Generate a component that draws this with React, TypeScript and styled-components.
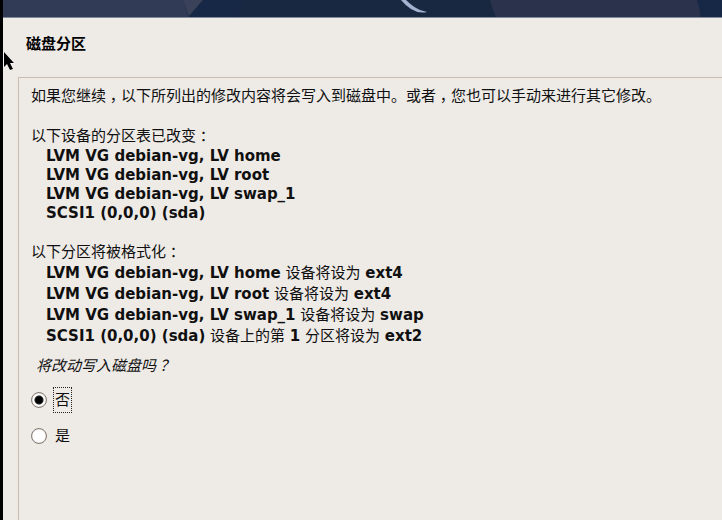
import React, { useState } from "react";
import styled, { createGlobalStyle } from "styled-components";

const GlobalStyle = createGlobalStyle`
  *, *::before, *::after { box-sizing: border-box; }
  body {
    margin: 0;
    background: #eeebe7;
    color: #101010;
    font-family: "DejaVu Sans", "Noto Sans CJK SC", sans-serif;
    font-size: 15px;
    overflow: hidden;
  }
`;

const Screen = styled.div`
  display: flex;
  flex-direction: column;
  min-height: 100vh;
  border-left: 3px solid #000;
`;

const Banner = styled.header`
  height: 18px;
  background: #192841;
  border-bottom: 1px solid #818b9c;
  overflow: hidden;
`;

const BannerArt = styled.svg`
  display: block;
`;

const Title = styled.h1`
  margin: 0;
  padding: 13px 23px 0;
  height: 59px;
  font-family: "Noto Sans CJK SC", sans-serif;
  font-size: 15px;
  line-height: 24px;
  font-weight: 700;
  color: #000;
`;

const Panel = styled.main`
  flex: 1;
  margin-left: 15px;
  padding: 7px 12px;
  border-top: 1px solid #c8bcae;
  border-left: 1px solid #c8bcae;
`;

const Paragraph = styled.p`
  margin: 0;
  font-family: "Noto Sans CJK SC", sans-serif;
  line-height: 20px;
  white-space: nowrap;
`;

const Section = styled.section`
  margin-top: 20px;

  & + & {
    margin-top: 18px;
  }
`;

const Mark = styled.span`
  display: inline-block;
  width: 15px;
  text-align: center;
  font-feature-settings: "halt";
`;

const Items = styled.ul<{ $line: number }>`
  margin: 0;
  padding: 2px 0 0 15px;
  list-style: none;
  white-space: nowrap;
  line-height: ${(p) => p.$line}px;
`;

const Strong = styled.b`
  font-weight: 700;
`;

const Choices = styled.fieldset`
  margin: 0;
  padding: 0;
  border: 0;
`;

const Question = styled.legend`
  padding: 8px 5px 12px;
  font-family: "Noto Sans CJK SC", sans-serif;
  font-style: italic;
  line-height: 20px;
`;

const Choice = styled.label`
  display: flex;
  align-items: center;
  gap: 6px;
  width: max-content;
  height: 26px;
  margin-bottom: 10px;
`;

const Radio = styled.input`
  appearance: none;
  width: 16px;
  height: 16px;
  margin: 0;
  border: 1px solid #877b73;
  border-radius: 50%;
  background: #fff;
  box-shadow: inset 0 0 1px #877b73;
  outline: none;

  &:checked {
    background: radial-gradient(circle at 50% 50%, #000 0 3px, #222 4px, #fff 5px);
  }
`;

const ChoiceText = styled.span<{ $active: boolean }>`
  padding: 0 1px 2px;
  border: 1px dotted ${(p) => (p.$active ? "#222" : "transparent")};
  font-family: "Noto Sans CJK SC", sans-serif;
  line-height: 22px;
`;

const Pointer = styled.svg`
  position: absolute;
  left: 3px;
  top: 50px;
  pointer-events: none;
`;

const changedTables = [
  "LVM VG debian-vg, LV home",
  "LVM VG debian-vg, LV root",
  "LVM VG debian-vg, LV swap_1",
  "SCSI1 (0,0,0) (sda)",
];

const formatted: React.ReactNode[] = [
  <><Strong>LVM VG debian-vg, LV home</Strong> 设备将设为 <Strong>ext4</Strong></>,
  <><Strong>LVM VG debian-vg, LV root</Strong> 设备将设为 <Strong>ext4</Strong></>,
  <><Strong>LVM VG debian-vg, LV swap_1</Strong> 设备将设为 <Strong>swap</Strong></>,
  <><Strong>SCSI1 (0,0,0) (sda)</Strong> 设备上的第 <Strong>1</Strong> 分区将设为 <Strong>ext2</Strong></>,
];

const options = ["否", "是"];

export default function App() {
  const [answer, setAnswer] = useState("否");

  return (
    <Screen>
      <GlobalStyle />
      <Banner>
        <BannerArt width="719" height="17" viewBox="3 0 719 17" aria-hidden="true">
          <path d="M3 0H183L189 17H3Z" fill="#323b55" />
          <path d="M183 0H203L189 16Z" fill="#3a425a" />
          <path d="M203 0H244L237 17H189Z" fill="#172746" />
          <path d="M490 0H697Q700 8 701 17H496Q492 9 490 0Z" fill="#2a334b" />
          <path d="M701 17Q700 8 697 0H722V17Z" fill="#172746" />
          <path d="M401 0H406Q413 7 420 10L427 12Q419 14 411 9Q405 5 401 0Z" fill="#a3b4d2" />
        </BannerArt>
      </Banner>
      <Title>磁盘分区</Title>
      <Panel>
        <Paragraph>
          如果您继续<Mark>，</Mark>以下所列出的修改内容将会写入到磁盘中。或者<Mark>，</Mark>您也可以手动来进行其它修改。
        </Paragraph>
        <Section>
          <Paragraph>以下设备的分区表已改变<Mark>：</Mark></Paragraph>
          <Items $line={19}>
            {changedTables.map((name) => (
              <li key={name}><Strong>{name}</Strong></li>
            ))}
          </Items>
        </Section>
        <Section>
          <Paragraph>以下分区将被格式化<Mark>：</Mark></Paragraph>
          <Items $line={21}>
            {formatted.map((line, i) => (
              <li key={i}>{line}</li>
            ))}
          </Items>
        </Section>
        <Choices>
          <Question>将改动写入磁盘吗<Mark>？</Mark></Question>
          {options.map((option) => (
            <Choice key={option}>
              <Radio
                type="radio"
                name="write-changes"
                checked={answer === option}
                onChange={() => setAnswer(option)}
              />
              <ChoiceText $active={answer === option}>{option}</ChoiceText>
            </Choice>
          ))}
        </Choices>
      </Panel>
      <Pointer width="13" height="22" viewBox="0 0 13 22" aria-hidden="true">
        <path d="M1 2L11 13H7L10 19L7 20L4 14L1 17Z" fill="#000" stroke="#fff" strokeWidth="1" paintOrder="stroke" />
      </Pointer>
    </Screen>
  );
}
